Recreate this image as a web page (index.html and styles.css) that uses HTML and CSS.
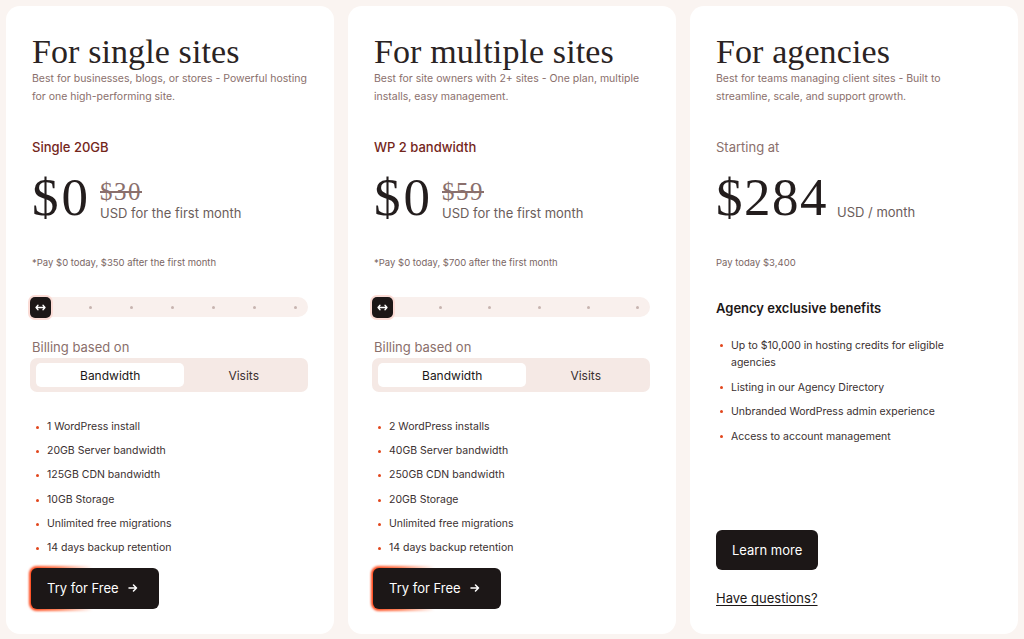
FILE: index.html
```html
<!DOCTYPE html>
<html lang="en">
<head>
    <meta charset="UTF-8">
    <meta name="viewport" content="width=device-width, initial-scale=1.0">
    <title>Plans</title>
    <link rel="stylesheet" href="styles.css">
</head>
<body>

    <div class="plans">

        <div class="plan">
            <h2 class="plan-title">For single sites</h2>
            <p class="plan-desc">Best for businesses, blogs, or stores - Powerful hosting for one high-performing site.</p>
            <div class="plan-name">Single 20GB</div>
            <div class="price">
                <span class="price-value">$0</span>
                <div class="price-side">
                    <s class="price-old">$30</s>
                    <span class="price-unit">USD for the first month</span>
                </div>
            </div>
            <div class="price-note">*Pay $0 today, $350 after the first month</div>

            <div class="slider">
                <span class="slider-thumb">
                    <svg width="11" height="7" viewBox="0 0 11 7"><path d="M1 3.5h9M3 1.2L1 3.5l2 2.3M8 1.2l2 2.3-2 2.3" fill="none" stroke="#fff" stroke-width="1.3" stroke-linecap="round" stroke-linejoin="round"/></svg>
                </span>
                <span class="slider-dot"></span>
                <span class="slider-dot"></span>
                <span class="slider-dot"></span>
                <span class="slider-dot"></span>
                <span class="slider-dot"></span>
                <span class="slider-dot"></span>
            </div>

            <div class="billing-label">Billing based on</div>
            <div class="toggle">
                <button class="toggle-btn active">Bandwidth</button>
                <button class="toggle-btn">Visits</button>
            </div>

            <ul class="features">
                <li>1 WordPress install</li>
                <li>20GB Server bandwidth</li>
                <li>125GB CDN bandwidth</li>
                <li>10GB Storage</li>
                <li>Unlimited free migrations</li>
                <li>14 days backup retention</li>
            </ul>

            <a href="#" class="btn btn-glow">Try for Free
                <svg width="10" height="8" viewBox="0 0 10 8"><path d="M1 4h7.5M5.5 1l3 3-3 3" fill="none" stroke="#fff" stroke-width="1.5" stroke-linecap="round" stroke-linejoin="round"/></svg>
            </a>
        </div>

        <div class="plan">
            <h2 class="plan-title">For multiple sites</h2>
            <p class="plan-desc">Best for site owners with 2+ sites - One plan, multiple installs, easy management.</p>
            <div class="plan-name">WP 2 bandwidth</div>
            <div class="price">
                <span class="price-value">$0</span>
                <div class="price-side">
                    <s class="price-old">$59</s>
                    <span class="price-unit">USD for the first month</span>
                </div>
            </div>
            <div class="price-note">*Pay $0 today, $700 after the first month</div>

            <div class="slider">
                <span class="slider-thumb">
                    <svg width="11" height="7" viewBox="0 0 11 7"><path d="M1 3.5h9M3 1.2L1 3.5l2 2.3M8 1.2l2 2.3-2 2.3" fill="none" stroke="#fff" stroke-width="1.3" stroke-linecap="round" stroke-linejoin="round"/></svg>
                </span>
                <span class="slider-dot"></span>
                <span class="slider-dot"></span>
                <span class="slider-dot"></span>
                <span class="slider-dot"></span>
                <span class="slider-dot"></span>
            </div>

            <div class="billing-label">Billing based on</div>
            <div class="toggle">
                <button class="toggle-btn active">Bandwidth</button>
                <button class="toggle-btn">Visits</button>
            </div>

            <ul class="features">
                <li>2 WordPress installs</li>
                <li>40GB Server bandwidth</li>
                <li>250GB CDN bandwidth</li>
                <li>20GB Storage</li>
                <li>Unlimited free migrations</li>
                <li>14 days backup retention</li>
            </ul>

            <a href="#" class="btn btn-glow">Try for Free
                <svg width="10" height="8" viewBox="0 0 10 8"><path d="M1 4h7.5M5.5 1l3 3-3 3" fill="none" stroke="#fff" stroke-width="1.5" stroke-linecap="round" stroke-linejoin="round"/></svg>
            </a>
        </div>

        <div class="plan">
            <h2 class="plan-title">For agencies</h2>
            <p class="plan-desc">Best for teams managing client sites - Built to streamline, scale, and support growth.</p>
            <div class="plan-name plan-name-muted">Starting at</div>
            <div class="price">
                <span class="price-value price-value-wide">$284</span>
                <div class="price-side">
                    <span class="price-unit price-unit-month">USD / month</span>
                </div>
            </div>
            <div class="price-note">Pay today $3,400</div>

            <h3 class="benefits-title">Agency exclusive benefits</h3>
            <ul class="features features-agency">
                <li>Up to $10,000 in hosting credits for eligible agencies</li>
                <li>Listing in our Agency Directory</li>
                <li>Unbranded WordPress admin experience</li>
                <li>Access to account management</li>
            </ul>

            <div class="plan-footer">
                <a href="#" class="btn btn-learn">Learn more</a>
                <a href="#" class="questions-link">Have questions?</a>
            </div>
        </div>

    </div>

</body>
</html>
```

FILE: styles.css
```css
* {
    margin: 0;
    padding: 0;
    box-sizing: border-box;
}

body {
    font-family: Inter, 'Open Sans', sans-serif;
    background-color: #faf4f1;
    color: #1c1717;
    padding: 6px;
}

.plans {
    display: grid;
    grid-template-columns: repeat(3, 328px);
    gap: 14px;
    height: 628px;
}

.plan {
    background: #fff;
    border-radius: 14px;
    padding: 28px 26px 25px 26px;
    display: flex;
    flex-direction: column;
}

.plan-title {
    font-family: 'Liberation Serif', serif;
    font-weight: normal;
    font-size: 34px;
    line-height: 36px;
    letter-spacing: 0.1px;
    color: #2a2323;
}

.plan-desc {
    font-size: 10.5px;
    line-height: 18px;
    color: #8a6f6c;
}

.plan-name {
    margin-top: 32px;
    font-size: 13px;
    font-weight: 500;
    line-height: 18px;
    color: #74261b;
}

.plan-name-muted {
    font-weight: 400;
    color: #8a6f6c;
}

.price {
    margin-top: 16px;
    display: flex;
    align-items: flex-end;
    gap: 9px;
    height: 52px;
}

.price-value {
    font-family: 'Liberation Serif', serif;
    font-size: 53px;
    line-height: 1;
    letter-spacing: 3px;
    color: #231d1d;
}

.price-value-wide {
    letter-spacing: 1.5px;
}

.price-side {
    display: flex;
    flex-direction: column;
    padding-bottom: 2px;
}

.price-old {
    font-family: 'Liberation Serif', serif;
    font-size: 25px;
    line-height: 24px;
    letter-spacing: 1.5px;
    color: #8a6f6c;
}

.price-unit {
    font-size: 13px;
    line-height: 18px;
    color: #6b5d5b;
}

.price-unit-month {
    padding-bottom: 1px;
}

.price-note {
    margin-top: 32px;
    font-size: 9.5px;
    line-height: 14px;
    color: #7a6664;
}

.slider {
    margin-top: 27px;
    margin-left: -2px;
    height: 20px;
    border-radius: 10px;
    background: #f9f0ed;
    display: flex;
    align-items: center;
    justify-content: space-between;
    padding-right: 11px;
}

.slider-thumb {
    width: 21px;
    height: 21px;
    border-radius: 5px;
    background: #1c1717;
    box-shadow: 0 0 0 2px #fbdcd6;
    display: flex;
    align-items: center;
    justify-content: center;
}

.slider-dot {
    width: 3px;
    height: 3px;
    border-radius: 50%;
    background: #c7b4b0;
}

.billing-label {
    margin-top: 21px;
    font-size: 13px;
    line-height: 18px;
    color: #8a6f6c;
}

.toggle {
    margin-top: 2px;
    margin-left: -2px;
    height: 34px;
    background: #f5e9e5;
    border-radius: 7px;
    padding: 5px 5px 5px 6px;
    display: flex;
}

.toggle-btn {
    flex: 1 1 auto;
    border: none;
    background: transparent;
    border-radius: 5px;
    font-family: inherit;
    font-size: 12px;
    color: #3a3030;
}

.toggle-btn.active {
    background: #fff;
    color: #1c1717;
}

.features {
    list-style: none;
    margin-top: 23px;
}

.features li {
    position: relative;
    padding-left: 15px;
    font-size: 10.5px;
    line-height: 24.2px;
    color: #3a3030;
}

.features li::before {
    content: '';
    position: absolute;
    left: 4px;
    top: 11px;
    width: 3px;
    height: 3px;
    border-radius: 50%;
    background: #e2461c;
}

.features-agency {
    margin-top: 20px;
    padding-right: 38px;
}

.features-agency li {
    line-height: 17px;
    margin-bottom: 7.5px;
}

.features-agency li::before {
    top: 7px;
}

.benefits-title {
    margin-top: 29px;
    font-size: 13px;
    font-weight: 600;
    line-height: 18px;
    color: #1c1717;
}

.btn {
    display: inline-flex;
    align-items: center;
    gap: 9px;
    align-self: flex-start;
    background: #1c1717;
    color: #fff;
    text-decoration: none;
    font-size: 13px;
    border-radius: 6px;
    position: relative;
}

.btn-glow {
    margin-top: 8px;
    margin-left: -1px;
    height: 41px;
    padding: 0 21px 2px 16px;
    background: transparent;
    isolation: isolate;
}

/* orange rim on the left, fading out along the top and bottom edges */
.btn-glow::before {
    content: '';
    position: absolute;
    inset: -2px;
    border-radius: 8px;
    background: linear-gradient(90deg, #ff4010 0%, rgba(255, 80, 25, 0.75) 22%, rgba(255, 90, 30, 0) 48%);
    z-index: -2;
    filter: blur(0.8px);
}

.btn-glow::after {
    content: '';
    position: absolute;
    inset: 0;
    border-radius: 6px;
    background: #1c1717;
    z-index: -1;
}

.plan-footer {
    margin-top: auto;
    display: flex;
    flex-direction: column;
    align-items: flex-start;
    padding-bottom: 2px;
}

.btn-learn {
    height: 40px;
    padding: 0 16px;
}

.questions-link {
    margin-top: 19px;
    font-size: 13px;
    line-height: 18px;
    color: #1c1717;
    text-decoration: underline;
    text-underline-offset: 2px;
}
```
